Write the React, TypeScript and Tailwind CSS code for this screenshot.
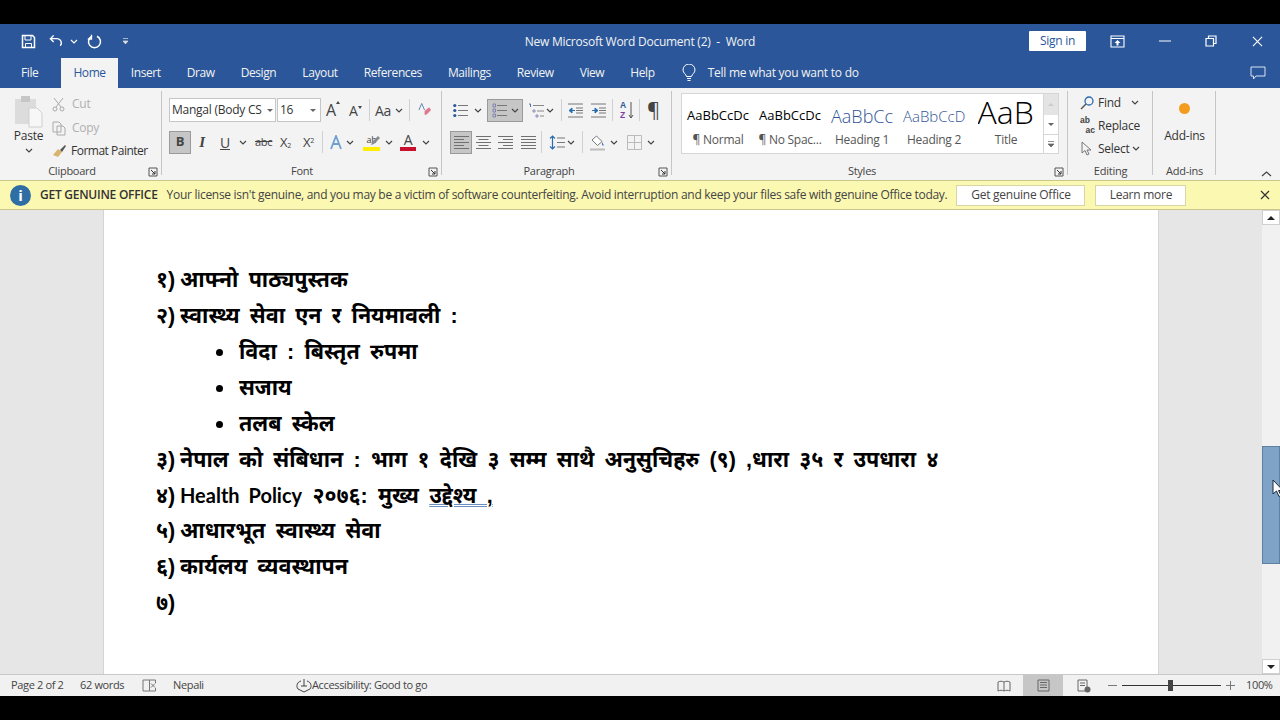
import React from "react";

const Chev = ({ c = "#444", className = "" }: { c?: string; className?: string }) => (
  <svg width="8" height="5" viewBox="0 0 8 5" className={`shrink-0 ${className}`}><path d="M1 1l3 3 3-3" fill="none" stroke={c} strokeWidth="1.2" /></svg>
);

const Launcher = () => (
  <svg width="10" height="10" viewBox="0 0 10 10"><path d="M1 9V1h8v8z" fill="none" stroke="#555" /><path d="M3 3l4 4M7 4v3H4" fill="none" stroke="#333" /></svg>
);

const Sep = ({ className = "" }: { className?: string }) => <div className={`w-px h-[22px] bg-[#d0d0d0] shrink-0 ${className}`} />;

const Align = ({ kind, className = "" }: { kind: "left" | "center" | "right" | "justify"; className?: string }) => {
  const long = [true, false, true, false, true];
  return (
    <svg width="15" height="15" viewBox="0 0 15 15" className={`shrink-0 ${className}`}>
      {long.map((l, i) => {
        const len = l || kind === "justify" ? 15 : 10;
        const x = kind === "left" || kind === "justify" ? 0 : kind === "right" ? 15 - len : (15 - len) / 2;
        return <path key={i} d={`M${x} ${1.5 + i * 3}h${len}`} stroke="#707070" strokeWidth="1" />;
      })}
    </svg>
  );
};

const BulletIcon = () => (
  <svg width="15" height="15" viewBox="0 0 15 15" className="shrink-0">
    {[2.5, 7.5, 12.5].map((y) => (
      <g key={y}><circle cx="1.800" cy={y} r="1.600" fill="#2b579a" /><path d={`M5 ${y}h10`} stroke="#777" /></g>
    ))}
  </svg>
);

const NumberIcon = ({ w = 15 }: { w?: number }) => (
  <svg width={w} height="15" viewBox="0 0 15 15" className="shrink-0">
    {[2.5, 7.5, 12.5].map((y) => (
      <g key={y}><path d={`M1 ${y - 1.5}h2.500v3H1z`} fill="none" stroke="#6a6aa8" strokeWidth="0.700" /><path d={`M5 ${y}h10`} stroke="#777" /></g>
    ))}
  </svg>
);

const MultiIcon = () => (
  <svg width="16" height="15" viewBox="0 0 16 15" className="shrink-0">
    <path d="M1 1h1.500v3" fill="none" stroke="#2b579a" strokeWidth="0.800" />
    <path d="M5 7h2v2H5zM8 12h2v2H8z" fill="none" stroke="#6a6aa8" strokeWidth="0.700" />
    <path d="M5 2.500h11M9 8h7M12 13h4" stroke="#888" />
  </svg>
);

const IndentIcon = ({ inc, className = "" }: { inc?: boolean; className?: string }) => (
  <svg width="15" height="15" viewBox="0 0 15 15" className={`shrink-0 ${className}`}>
    <path d="M0 1h15M0 14h15M8 5h7M8 7.500h7M8 10h7" stroke="#777" />
    {inc ? <path d="M1 7.500h3V5l3 2.500-3 2.500V7.500" fill="#2b6cb0" stroke="#2b6cb0" /> : <path d="M7 7.500H4V5L1 7.500 4 10V7.500" fill="#2b6cb0" stroke="#2b6cb0" />}
  </svg>
);

const Group = ({ w, label, launcher, children, labelCls = "" }: { w: string; label: string; launcher?: boolean; children: React.ReactNode; labelCls?: string }) => (
  <div className={`${w} relative flex flex-col h-[92px] shrink-0`}>
    <div className="absolute right-0 top-[3px] h-[84px] w-px bg-[#c6c6c6]" />
    <div className="h-[73px] mt-[3px] flex-none">{children}</div>
    <div className={`text-[11px] text-[#444] text-center leading-[14px] ${labelCls}`}>{label}</div>
    {launcher && <div className="absolute right-[4px] bottom-[3px]"><Launcher /></div>}
  </div>
);

const Tab = ({ children, active }: { children: React.ReactNode; active?: boolean }) => (
  <div className={active ? "h-[30px] px-[12px] bg-[#f3f3f3] text-[#2b579a] flex items-center tracking-[-0.4px]" : "h-[30px] flex items-center text-[#f2f2f2] px-[13px] tracking-[-0.4px]"}>{children}</div>
);

const Style = ({ top, bottom, cls }: { top: string; bottom: string; cls: string }) => (
  <div className="flex flex-col items-center w-[72px] shrink-0">
    <div className={`h-[36px] w-[62px] flex items-center justify-center overflow-hidden whitespace-nowrap pt-[8px] ${cls}`}>{top}</div>
    <div className="text-[12px] text-[#555] mt-[2px] leading-[16px] whitespace-nowrap">{bottom}</div>
  </div>
);

const Line = ({ n, children }: { n: string; children?: React.ReactNode }) => (
  <div className="h-[35.9px] flex items-center whitespace-nowrap">
    <span className="w-[24px]">{n}</span>
    <span className="[word-spacing:4.3px]">{children}</span>
  </div>
);

const Bullet = ({ children }: { children: React.ReactNode }) => (
  <div className="h-[35.9px] flex items-center whitespace-nowrap pl-[60px]">
    <span className="w-[7px] h-[7px] rounded-full bg-black mr-[16px]" />
    <span className="[word-spacing:4.3px]">{children}</span>
  </div>
);

export default function App() {
  return (
    <div className="w-[1280px] h-[720px] bg-black flex flex-col overflow-hidden font-['Open_Sans','Noto_Sans',sans-serif] text-[12px] tracking-[-0.25px] text-[#333]">
      <div className="h-[24px] shrink-0" />
      {/* Title bar */}
      <div className="h-[34px] bg-[#2b579a] flex items-center text-white shrink-0">
        <div className="flex items-center pl-[21px]">
          <svg width="15" height="15" viewBox="0 0 15 15"><path d="M1.500 1.500h10l2 2v10h-12z" fill="none" stroke="#fff" strokeWidth="1.500" /><path d="M4 2v4h6V2M4.500 13.500V9.500h6v4" fill="none" stroke="#fff" /></svg>
          <svg className="ml-[13px]" width="15" height="14" viewBox="0 0 16 14"><path d="M5 1L1.500 4.500 5 8M2 4.500h7a4.500 4.500 0 0 1 3 7.500" fill="none" stroke="#fff" strokeWidth="1.500" /></svg>
          <Chev c="#fff" className="ml-[6px]" />
          <svg className="ml-[9px]" width="15" height="15" viewBox="0 0 15 15"><path d="M5 2.200A6 6 0 1 0 10 2.200" fill="none" stroke="#fff" strokeWidth="1.500" /><path d="M4.500 0.800v4.200H0.800" fill="none" stroke="#fff" strokeWidth="1.300" /></svg>
          <svg className="ml-[20px]" width="7" height="7" viewBox="0 0 7 7"><path d="M1 0.500h5M1 3h5l-2.500 3z" stroke="#ddd" fill="#ddd" strokeWidth="0.700" /></svg>
        </div>
        <div className="flex-1 text-center pl-[122px] text-[#f2f2f2] pt-[2px] whitespace-nowrap">New Microsoft Word Document (2)&nbsp; -&nbsp; Word</div>
        <div className="bg-white text-[#2b579a] w-[57px] h-[20px] flex items-center justify-center rounded-[1px] mr-[24px]">Sign in</div>
        <svg className="mr-[34px]" width="15" height="13" viewBox="0 0 15 13"><path d="M1 1h13v11H1zM1 3.500h13" fill="none" stroke="#fff" strokeWidth="1.100" /><path d="M7.500 5l3 3H8.500v2.500h-2V8h-2z" fill="#fff" /></svg>
        <svg className="mr-[34px]" width="12" height="2" viewBox="0 0 12 2"><path d="M0 1h12" stroke="#fff" /></svg>
        <svg className="mr-[35px]" width="12" height="12" viewBox="0 0 12 12"><path d="M1 3.500h7.500V11H1zM3.500 3.500V1H11v7.500H8.500" fill="none" stroke="#fff" strokeWidth="1.200" /></svg>
        <svg className="mr-[17px]" width="11" height="11" viewBox="0 0 12 12"><path d="M1 1l10 10M11 1L1 11" stroke="#fff" strokeWidth="1.200" /></svg>
      </div>
      {/* Tabs */}
      <div className="h-[30px] bg-[#2b579a] flex items-center shrink-0">
        <div className="pl-[8px] flex items-center">
          <Tab>File</Tab>
          <div className="w-[10px]" />
          <Tab active>Home</Tab>
          <Tab>Insert</Tab>
          <Tab>Draw</Tab>
          <Tab>Design</Tab>
          <Tab>Layout</Tab>
          <Tab>References</Tab>
          <Tab>Mailings</Tab>
          <Tab>Review</Tab>
          <Tab>View</Tab>
          <Tab>Help</Tab>
        </div>
        <svg className="ml-[14px]" width="14" height="18" viewBox="0 0 14 18"><path d="M4.500 12.500C4 10 1 9 1 6a6 6 0 0 1 12 0c0 3-3 4-3.500 6.500zM5 14.500h4M5.500 16.500h3" fill="none" stroke="#fff" /></svg>
        <div className="ml-[12px] text-[#f2f2f2] flex-1">Tell me what you want to do</div>
        <svg className="mr-[14px]" width="16" height="14" viewBox="0 0 16 14"><path d="M1 1h14v9H6l-2.500 3v-3H1z" fill="none" stroke="#dbe4f0" /></svg>
      </div>
      {/* Ribbon */}
      <div className="h-[92px] bg-[#f3f3f3] flex shrink-0">
        <Group w="w-[162px]" label="Clipboard" launcher labelCls="pr-[18px]">
          <div className="flex">
            <div className="w-[50px] flex flex-col items-center pl-[7px]">
              <svg className="mt-[4px]" width="30" height="33" viewBox="0 0 30 33"><rect x="1" y="4" width="21" height="25" fill="#dcdcdc" /><rect x="7" y="1" width="9" height="6" fill="#c6c6c6" /><path d="M15 13h8l5 5v14H15z" fill="#f7f7f7" stroke="#cfcfcf" /></svg>
              <div className="leading-[16px]">Paste</div>
              <Chev className="mt-[4px]" />
            </div>
            <div className="pt-[1px] ml-[2px]">
              <div className="h-[24px] flex items-center text-[#b0b0b0]">
                <svg width="14" height="15" viewBox="0 0 14 15"><path d="M2 1l7 9M11 1l-7 9" stroke="#aaa" fill="none" /><circle cx="3" cy="12" r="2" fill="none" stroke="#aaa" /><circle cx="10" cy="12" r="2" fill="none" stroke="#aaa" /></svg>
                <span className="ml-[6px]">Cut</span>
              </div>
              <div className="h-[24px] flex items-center text-[#b0b0b0]">
                <svg width="14" height="15" viewBox="0 0 14 15"><path d="M1 1h6l2 2v8H1zM5 5h6l2 2v7H5z" fill="#f3f3f3" stroke="#aaa" /></svg>
                <span className="ml-[6px]">Copy</span>
              </div>
              <div className="h-[22px] flex items-center whitespace-nowrap">
                <svg width="15" height="14" viewBox="0 0 15 14"><path d="M1 11l5-6 4 3-4 5z" fill="#d9b46e" /><path d="M8 6l5-5 1 1-4 6z" fill="#555" /></svg>
                <span className="ml-[4px] tracking-[-0.5px]">Format Painter</span>
              </div>
            </div>
          </div>
        </Group>
        <Group w="w-[280px]" label="Font" launcher>
          <div className="pl-[7px] pt-[7px]">
            <div className="flex items-center h-[24px]">
              <div className="w-[107px] h-[24px] border border-[#c6c6c6] bg-white flex items-center justify-between px-[2px] whitespace-nowrap overflow-hidden">Mangal (Body CS<svg className="shrink-0" width="6" height="3" viewBox="0 0 6 3"><path d="M0 0h6L3 3z" fill="#666" /></svg></div>
              <div className="w-[44px] h-[24px] ml-[1px] border border-[#c6c6c6] bg-white flex items-center justify-between px-[2px]">16<svg className="mr-[2px]" width="6" height="3" viewBox="0 0 6 3"><path d="M0 0h6L3 3z" fill="#666" /></svg></div>
              <div className="ml-[5px] w-[15px] flex text-[16px] text-[#444]">A<svg className="mt-[3px]" width="4" height="3" viewBox="0 0 4 3"><path d="M2 0l2 3H0z" fill="#444" /></svg></div>
              <div className="ml-[8px] w-[15px] flex items-end text-[14px] text-[#444]">A<svg className="mb-[12px]" width="4" height="3" viewBox="0 0 4 3"><path d="M0 0h4L2 3z" fill="#444" /></svg></div>
              <Sep className="ml-[5px]" />
              <span className="ml-[5px] w-[18px] text-[14px] text-[#444]">Aa</span>
              <Chev className="ml-[2px]" />
              <Sep className="ml-[6px]" />
              <svg className="ml-[8px]" width="14" height="16" viewBox="0 0 15 16"><path d="M7 9l5-4 2 3-5 5H7z" fill="#e0788c" /><path d="M1 8l3-7 3 7" fill="none" stroke="#5b7fb0" /></svg>
            </div>
            <div className="flex items-center h-[24px] mt-[8px] text-[#444]">
              <div className="w-[22px] h-[23px] bg-[#c6c6c6] border border-[#9a9a9a] flex items-center justify-center text-[13px] font-bold">B</div>
              <span className="ml-[4px] w-[14px] text-center text-[15px] italic font-['Liberation_Serif',serif] font-bold">I</span>
              <span className="ml-[9px] w-[14px] text-center text-[14px] underline">U</span>
              <Chev className="ml-[7px]" />
              <span className="ml-[8px] w-[17px] text-[11px] line-through">abc</span>
              <span className="ml-[8px] w-[13px] text-[13px] leading-none">X<sub className="text-[7px]">2</sub></span>
              <span className="ml-[10px] w-[13px] text-[13px] leading-none">X<sup className="text-[7px]">2</sup></span>
              <Sep className="ml-[6px]" />
              <svg className="ml-[6px]" width="14" height="15" viewBox="0 0 14 15"><path d="M2 14L7 1l5 13M4 9h6" fill="none" stroke="#6da0d0" strokeWidth="1.800" /></svg>
              <Chev className="ml-[3px]" />
              <div className="ml-[9px] w-[17px] h-[17px] relative flex flex-col items-center shrink-0">
                <span className="text-[9px] leading-[11px]">ab</span>
                <svg className="absolute right-0 top-[1px]" width="10" height="11" viewBox="0 0 10 11"><path d="M1 10l1-3 6-6 2 2-6 6z" fill="#8a8a8a" /></svg>
                <div className="absolute bottom-0 left-0 w-[17px] h-[4px] bg-[#ffee00]" />
              </div>
              <Chev className="ml-[5px]" />
              <div className="ml-[7px] w-[16px] h-[18px] relative flex justify-center shrink-0">
                <span className="text-[14px] leading-[14px]">A</span>
                <div className="absolute bottom-0 left-0 w-[16px] h-[4px] bg-[#c8102e]" />
              </div>
              <Chev className="ml-[6px]" />
            </div>
          </div>
        </Group>
        <Group w="w-[230px]" label="Paragraph" launcher labelCls="pr-[16px]">
          <div className="pl-[8px] pt-[7px]">
            <div className="flex items-center h-[24px] pl-[3px]">
              <BulletIcon />
              <Chev className="ml-[6px]" />
              <div className="ml-[5px] w-[36px] h-[23px] shrink-0 bg-[#c6c6c6] border border-[#9a9a9a] flex items-center justify-center gap-[4px]"><NumberIcon /><Chev /></div>
              <div className="ml-[5px]"><MultiIcon /></div>
              <Chev className="ml-[2px]" />
              <Sep className="ml-[7px]" />
              <IndentIcon className="ml-[6px]" />
              <IndentIcon inc className="ml-[8px]" />
              <Sep className="ml-[6px]" />
              <div className="ml-[7px] w-[8px] flex flex-col shrink-0 font-['Liberation_Sans',sans-serif] font-bold text-[8.5px] leading-[10px] tracking-[0px]">
                <span className="h-[10px] text-[#2b579a]">A</span>
                <span className="h-[10px] text-[#7b3fa0]">Z</span>
              </div>
              <svg className="shrink-0" width="6" height="20" viewBox="0 0 6 20"><path d="M3 2v16M1 15l2 3 2-3" fill="none" stroke="#555" /></svg>
              <Sep className="ml-[5px]" />
              <span className="ml-[7px] text-[20px] leading-[20px] text-[#444]">¶</span>
            </div>
            <div className="flex items-center h-[24px] mt-[8px]">
              <div className="w-[22px] h-[23px] shrink-0 bg-[#c6c6c6] border border-[#9a9a9a] flex items-center justify-center"><Align kind="left" /></div>
              <Align kind="center" className="ml-[4px]" />
              <Align kind="right" className="ml-[7px]" />
              <Align kind="justify" className="ml-[8px]" />
              <Sep className="ml-[5px]" />
              <svg className="ml-[7px] shrink-0" width="16" height="15" viewBox="0 0 16 15"><path d="M3.500 1v13M1 3.500L3.500 1 6 3.500M1 11.500L3.500 14 6 11.500" fill="none" stroke="#2b6cb0" strokeWidth="1.200" /><path d="M8 3h8M8 7.500h8M8 12h8" stroke="#777" /></svg>
              <Chev className="ml-[2px]" />
              <Sep className="ml-[7px]" />
              <svg className="ml-[6px] shrink-0" width="17" height="17" viewBox="0 0 17 17"><path d="M7.500 2l5.500 5.500-4.500 4L3 6z" fill="#fff" stroke="#777" /><path d="M13 8c1 2 2 2.500 1.500 3.500S12.500 11 13 8z" fill="#2b6cb0" /><path d="M1 15.500h15" stroke="#bbb" strokeWidth="2" /></svg>
              <Chev className="ml-[4px]" />
              <svg className="ml-[9px] shrink-0" width="15" height="15" viewBox="0 0 15 15"><path d="M0.500 0.500h14v14h-14zM7.500 0.500v14M0.500 7.500h14" fill="none" stroke="#bbb" /></svg>
              <Chev className="ml-[5px]" />
            </div>
          </div>
        </Group>
        <Group w="w-[396px]" label="Styles" launcher labelCls="pr-[16px]">
          <div className="ml-[9px] mt-[2px] w-[378px] h-[61px] bg-white border border-[#d6d6d6] flex">
            <Style top="AaBbCcDc" bottom="¶ Normal" cls="text-[13px] text-black tracking-[0px]" />
            <Style top="AaBbCcDc" bottom="¶ No Spac..." cls="text-[13px] text-black tracking-[0px]" />
            <Style top="AaBbCc" bottom="Heading 1" cls="text-[18px] font-light text-[#2f5496] tracking-[0px] !justify-start" />
            <Style top="AaBbCcD" bottom="Heading 2" cls="text-[15px] font-light text-[#2f5496] tracking-[0px] !justify-start" />
            <div className="flex flex-col items-center w-[72px] shrink-0">
              <div className="h-[35px] w-[57px] text-[32px] font-light leading-[35px] text-black whitespace-nowrap overflow-hidden tracking-[0px]">AaB</div>
              <div className="text-[12px] text-[#555] mt-[3px] leading-[16px]">Title</div>
            </div>
            <div className="ml-auto w-[15px] border-l border-[#d6d6d6] flex flex-col">
              <div className="h-[21px] bg-[#e4e4e4] flex items-center justify-center"><svg width="6" height="3" viewBox="0 0 6 3"><path d="M3 0l3 3H0z" fill="#ccc" /></svg></div>
              <div className="h-[20px] border-b border-[#d6d6d6] flex items-center justify-center"><svg width="6" height="3" viewBox="0 0 6 3"><path d="M0 0h6L3 3z" fill="#666" /></svg></div>
              <div className="flex-1 flex items-center justify-center"><svg width="6" height="6" viewBox="0 0 6 6"><path d="M0 0.500h6M0 3h6L3 6z" stroke="#666" strokeWidth="0.700" fill="#666" /></svg></div>
            </div>
          </div>
        </Group>
        <Group w="w-[85px]" label="Editing">
          <div className="pl-[12px]">
            <div className="h-[23px] flex items-center whitespace-nowrap">
              <svg width="14" height="14" viewBox="0 0 14 14"><circle cx="9" cy="5" r="4" fill="none" stroke="#2b6cb0" strokeWidth="1.300" /><path d="M6 8l-5 5" stroke="#555" strokeWidth="1.500" /></svg>
              <span className="ml-[4px]">Find</span><Chev className="ml-[10px]" />
            </div>
            <div className="h-[23px] flex items-center whitespace-nowrap">
              <div className="w-[15px] flex flex-col shrink-0 font-['Liberation_Sans',sans-serif] text-[8.5px] leading-[9px] font-bold text-[#444] tracking-[0px]">
                <span className="h-[10px]">ab</span>
                <span className="h-[10px] text-right">ac</span>
              </div>
              <span className="ml-[3px]">Replace</span>
            </div>
            <div className="h-[23px] flex items-center whitespace-nowrap">
              <svg width="12" height="15" viewBox="0 0 12 15"><path d="M2 1v11l3-2.500 2 4.500 2-1-2-4h4z" fill="none" stroke="#777" /></svg>
              <span className="ml-[6px]">Select</span><Chev className="ml-[2px]" />
            </div>
          </div>
        </Group>
        <Group w="w-[63px]" label="Add-ins">
          <div className="flex flex-col items-center">
            <div className="w-[11px] h-[11px] rounded-full bg-[#f39c1f] mt-[12px]" />
            <div className="mt-[14px] leading-[16px]">Add-ins</div>
          </div>
        </Group>
        <div className="flex-1 flex items-end justify-end pr-[8px] pb-[3px]">
          <svg width="11" height="6" viewBox="0 0 11 6"><path d="M1 5l4.500-4 4.500 4" fill="none" stroke="#444" strokeWidth="1.200" /></svg>
        </div>
      </div>
      {/* Message bar */}
      <div className="h-[30px] bg-[#fbf8b2] border-y border-[#c9c68e] flex items-center shrink-0 text-[#444] whitespace-nowrap">
        <div className="ml-[10px] w-[21px] h-[21px] shrink-0 rounded-full bg-[#2f6ea5] text-white flex items-center justify-center text-[15px] font-bold">i</div>
        <span className="ml-[9px] font-semibold text-[#333]">GET GENUINE OFFICE</span>
        <span className="ml-[9px] tracking-[-0.29px]">Your license isn't genuine, and you may be a victim of software counterfeiting. Avoid interruption and keep your files safe with genuine Office today.</span>
        <div className="ml-[9px] w-[129px] h-[21px] shrink-0 bg-white border border-[#d8d6a6] flex items-center justify-center">Get genuine Office</div>
        <div className="ml-[10px] w-[91px] h-[21px] shrink-0 bg-white border border-[#d8d6a6] flex items-center justify-center">Learn more</div>
        <svg className="ml-[74px] shrink-0" width="10" height="10" viewBox="0 0 10 10"><path d="M1 1l8 8M9 1L1 9" stroke="#333" strokeWidth="1.200" /></svg>
      </div>
      {/* Document */}
      <div className="h-[464px] bg-[#e6e6e6] flex shrink-0 relative">
        <div className="ml-[103px] w-[1056px] bg-white border-x border-[#d4d4d4] pl-[52px] pt-[53px] text-[21.5px] tracking-[0px] font-bold text-black font-['Liberation_Sans','Noto_Sans_Devanagari',sans-serif] leading-none">
          <Line n="१)">आफ्नो पाठ्यपुस्तक</Line>
          <Line n="२)">स्वास्थ्य सेवा एन र नियमावली :</Line>
          <Bullet>विदा : बिस्तृत रुपमा</Bullet>
          <Bullet>सजाय</Bullet>
          <Bullet>तलब स्केल</Bullet>
          <Line n="३)">नेपाल को संबिधान : भाग १ देखि ३ सम्म साथै अनुसुचिहरु (९) ,धारा ३५ र उपधारा ४</Line>
          <Line n="४)"><span className="text-[20px] font-['Lato',sans-serif] [word-spacing:4px]">Health Policy</span> २०७६: मुख्य <span className="underline decoration-double decoration-[1px] decoration-[#6a8fc0]">उद्देश्य ,</span></Line>
          <Line n="५)">आधारभूत स्वास्थ्य सेवा</Line>
          <Line n="६)">कार्यलय व्यवस्थापन</Line>
          <Line n="७)" />
        </div>
        <div className="ml-auto w-[18px] bg-[#f1f1f1] flex flex-col">
          <div className="h-[15px] bg-white border border-[#d0d0d0] flex items-center justify-center shrink-0"><svg width="8" height="4" viewBox="0 0 8 4"><path d="M4 0l4 4H0z" fill="#222" /></svg></div>
          <div className="h-[221px] shrink-0" />
          <div className="h-[118px] bg-[#7fa3c6] border border-[#5f7f9f] shrink-0" />
          <div className="flex-1" />
          <div className="h-[15px] bg-white border border-[#d0d0d0] flex items-center justify-center shrink-0"><svg width="8" height="4" viewBox="0 0 8 4"><path d="M0 0h8L4 4z" fill="#222" /></svg></div>
        </div>
        <svg className="absolute left-[1272px] top-[269px]" width="10" height="19" viewBox="0 0 10 19"><path d="M1 1v14l3.500-3 2.500 5.500 2-1-2.500-5H11z" fill="#fff" stroke="#1a2a3a" /></svg>
      </div>
      {/* Status bar */}
      <div className="h-[22px] bg-[#f1f1f1] border-t border-[#c8c8c8] flex items-center shrink-0 text-[11px] text-[#444] whitespace-nowrap tracking-[-0.35px]">
        <span className="ml-[11px] w-[53px]">Page 2 of 2</span>
        <span className="ml-[16px] w-[44px]">62 words</span>
        <svg className="ml-[18px]" width="15" height="13" viewBox="0 0 15 13"><path d="M7.500 1H1v11h6.500zM7.500 1h6v3M7.500 12h6V9" fill="none" stroke="#777" /><path d="M9 4.500l4 4M13 4.500l-4 4" stroke="#777" /></svg>
        <span className="ml-[16px] w-[30px]">Nepali</span>
        <svg className="ml-[93px]" width="16" height="15" viewBox="0 0 16 15"><path d="M5 3a5 5 0 0 0-3 8l6 3 6-3a5 5 0 0 0-3-8M8 1v7M5 8h6" fill="none" stroke="#444" /></svg>
        <span>Accessibility: Good to go</span>
        <svg className="ml-auto" width="14" height="12" viewBox="0 0 14 12"><path d="M7 2C5 1 3 1 1 2v9c2-1 4-1 6 0 2-1 4-1 6 0V2C11 1 9 1 7 2zM7 2v9" fill="none" stroke="#666" /></svg>
        <div className="ml-[12px] w-[40px] h-[21px] bg-[#c6c6c6] flex items-center justify-center"><svg width="13" height="13" viewBox="0 0 13 13"><path d="M1 1h11v11H1zM3 3.500h7M3 6h7M3 8.500h7" fill="none" stroke="#666" /></svg></div>
        <svg className="ml-[14px]" width="14" height="14" viewBox="0 0 14 14"><path d="M1 1h9v11H1zM3 4h5M3 6.500h5" fill="none" stroke="#666" /><circle cx="10.500" cy="10.500" r="3" fill="#666" /></svg>
        <svg className="ml-[17px]" width="9" height="9" viewBox="0 0 9 9"><path d="M0 4.500h9" stroke="#777" /></svg>
        <div className="ml-[5px] w-[99px] h-px bg-[#333] relative"><div className="absolute left-[46px] top-[-5px] w-[5px] h-[11px] bg-[#444]" /></div>
        <svg className="ml-[5px]" width="9" height="9" viewBox="0 0 9 9"><path d="M0 4.500h9M4.500 0v9" stroke="#777" /></svg>
        <span className="ml-[11px] w-[26px] mr-[8px]">100%</span>
      </div>
      <div className="flex-1" />
    </div>
  );
}
